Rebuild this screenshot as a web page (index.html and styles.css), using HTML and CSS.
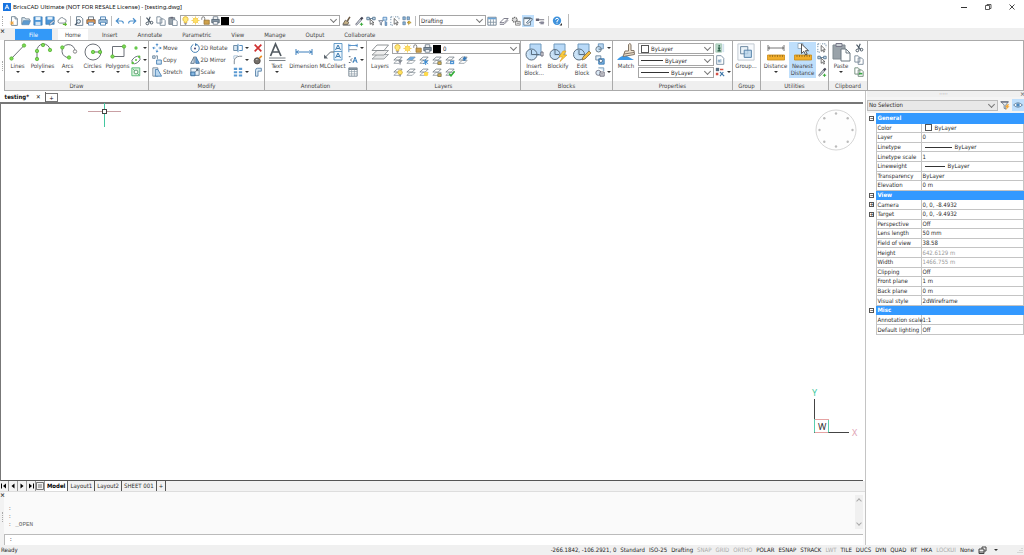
FILE: index.html
```html
<!DOCTYPE html>
<html lang="en">
<head>
<meta charset="utf-8">
<title>BricsCAD Ultimate - testing.dwg</title>
<link rel="stylesheet" href="styles.css">
</head>
<body>
<svg class="sprite" aria-hidden="true">
  <defs>
    <!-- small icons, 12 x 12 -->
    <symbol id="new" viewBox="0 0 12 12"><path d="M3 .8h4.500l2.500 2.500v8H3z" fill="#fff" stroke="#667b8c"/><path d="M7.300.8v2.700H10" fill="none" stroke="#667b8c"/><path d="M1 8.500h5M3.500 6v5M1.700 6.700l3.600 3.600M5.300 6.700l-3.600 3.600" stroke="#f0a030" stroke-width=".9"/></symbol>
    <symbol id="open" viewBox="0 0 12 12"><path d="M1 10V2h3.500l1 1.500H10V5" fill="#dce9f2" stroke="#667b8c"/><path d="M1 10.500 3 5.500h8.500l-2 5z" fill="#5d9bd0" stroke="#4a7ba5" stroke-width=".6"/></symbol>
    <symbol id="save" viewBox="0 0 12 12"><path d="M1 1h10v10H1z" fill="#4d96d8" stroke="#2f6ea8" stroke-width=".7"/><path d="M3 1.300h6v3.500H3z" fill="#e9f3fb"/><path d="M3 7h6v4H3z" fill="#d4e6f5"/></symbol>
    <symbol id="saveas" viewBox="0 0 12 12"><path d="M1 1h10v9H1z" fill="#4d96d8" stroke="#2f6ea8" stroke-width=".7"/><path d="M3 1.300h6v3H3z" fill="#e9f3fb"/><path d="m5 11 1-2.500L10.500 5l1 1L7 10.500z" fill="#eef" stroke="#467" stroke-width=".7"/></symbol>
    <symbol id="cloud" viewBox="0 0 12 12"><path d="M3 8.500a2.300 2.300 0 0 1 0-4.500 3 3 0 0 1 5.500-.5 2.500 2.500 0 0 1 0 5z" fill="#fff" stroke="#6d7a84"/><path d="M7 10h4M9.500 8.300 11.300 10l-1.800 1.700" fill="none" stroke="#59b82d" stroke-width="1.300"/></symbol>
    <symbol id="preview" viewBox="0 0 12 12"><path d="M3 .8h5l2.500 2.500v8H3z" fill="#fff" stroke="#5c7184"/><circle cx="5.500" cy="6.500" r="2.300" fill="#dcecf8" stroke="#456"/><path d="M3.800 8.200 1 11" stroke="#456" stroke-width="1.400"/></symbol>
    <symbol id="print" viewBox="0 0 12 12"><path d="M3 1h6v4H3z" fill="#fff" stroke="#567"/><path d="M1 4.500h10V9H1z" fill="#8596a4" stroke="#4a5a68"/><path d="M3 7.500h6V11H3z" fill="#fff" stroke="#567"/></symbol>
    <symbol id="printc" viewBox="0 0 12 12"><path d="M3 1h6v4H3z" fill="#fff" stroke="#567"/><path d="M1 4.500h10V9H1z" fill="#e39a53" stroke="#725844"/><path d="M3 7.500h6V11H3z" fill="#eef6ff" stroke="#5b86b5"/></symbol>
    <symbol id="printb" viewBox="0 0 12 12"><path d="M3 1h6v4H3z" fill="#e6f2fd" stroke="#3d7ab0"/><path d="M1 4.500h10V9H1z" fill="#a8c8e4" stroke="#4a6f92"/><path d="M3 7.500h6V11H3z" fill="#fff" stroke="#3d7ab0"/></symbol>
    <symbol id="undo" viewBox="0 0 12 12"><path d="M2 6h5.500q2.500 0 2.500 3M4.800 2.700 1.500 6l3.300 3.200" fill="none" stroke="#4b8fcc" stroke-width="1.400"/></symbol>
    <symbol id="redo" viewBox="0 0 12 12"><path d="M10 6H4.500Q2 6 2 9M7.200 2.700 10.500 6 7.200 9.200" fill="none" stroke="#4b8fcc" stroke-width="1.400"/></symbol>
    <symbol id="cut" viewBox="0 0 12 12"><path d="M7.500 1 5 7M3 2l5 6" stroke="#4d5a66" stroke-width="1.400"/><circle cx="4" cy="9" r="1.600" fill="none" stroke="#4d5a66" stroke-width="1.200"/><circle cx="9" cy="8" r="1.600" fill="none" stroke="#4d5a66" stroke-width="1.200"/></symbol>
    <symbol id="copy" viewBox="0 0 12 12"><path d="M1 1h4l2 2v5.500H1zM5 3.500h4l2 2v5.700H5z" fill="#fff" stroke="#6d7f90"/></symbol>
    <symbol id="copyg" viewBox="0 0 12 12"><path d="M1 1h4l2 2v5.500H1zM5 3.500h4l2 2v5.700H5z" fill="#fff" stroke="#63806d"/><path d="M6 8h4" stroke="#39a845" stroke-width="2"/></symbol>
    <symbol id="clip" viewBox="0 0 12 12"><path d="M1 2h7v8H1z" fill="#9aa5ae" stroke="#6a7681"/><path d="M3 1h3v2H3z" fill="#667"/><path d="M5.500 4.500H9l2 2v5H5.500z" fill="#fff" stroke="#6d7f90"/></symbol>
    <symbol id="bulb" viewBox="0 0 12 12"><path d="M6 .8a3.500 3.500 0 0 0-1.800 6.500V9h3.600V7.300A3.500 3.500 0 0 0 6 .8z" fill="#ffe97a" stroke="#d9ab2a"/><path d="M4.500 10h3M5 11.300h2" stroke="#778"/></symbol>
    <symbol id="sun" viewBox="0 0 12 12"><path d="M6 .5v11M.5 6h11M2 2l8 8M10 2l-8 8" stroke="#f2cb4b"/><circle cx="6" cy="6" r="3.300" fill="#ffe066" stroke="#eebd32" stroke-width=".7"/></symbol>
    <symbol id="lock" viewBox="0 0 12 12"><path d="M1 5V3a1.800 1.800 0 0 1 4 0v3" fill="none" stroke="#777" stroke-width="1.200"/><path d="M4 5.500h7V11H4z" fill="#cfa24c" stroke="#967132"/></symbol>
    <symbol id="brush" viewBox="0 0 12 12"><path d="m9.500 1-3 5" stroke="#6c5942" stroke-width="1.800"/><path d="m4 5 4 2.500L7 10H1z" fill="#c9b48a" stroke="#5f5648"/><path d="M1 11h9" stroke="#555"/></symbol>
    <symbol id="dropper" viewBox="0 0 12 12"><path d="m2 10 5-6 1.500 1.500-5.500 5.500z" fill="#e4edf3" stroke="#556"/><path d="m7 3 2.500-2.200 1.800 1.800L9 5z" fill="#445"/><path d="M7 9.800h4M9 8v3.600" stroke="#3cab3c" stroke-width="1.300"/></symbol>
    <symbol id="pick" viewBox="0 0 12 12"><path d="M1 1.500h3v3H1zM8 1.500h3v3H8zM4 3h4" fill="#cfe3f4" stroke="#4d6d89"/><path d="M5 4v6l1.500-1.400L8 11l1-.6L7.800 8H9.500z" fill="#fff" stroke="#333" stroke-width=".8"/></symbol>
    <symbol id="filter" viewBox="0 0 12 12"><path d="M6 1.500h4.500V5H6z" fill="#cfe3f4" stroke="#4d86bd"/><path d="M.8 5.500H6L4.200 8v3l-1.500-.8V8z" fill="#dde" stroke="#567" stroke-width=".8"/><path d="M8.500 6v5.500h2V7" fill="#79a9d8" stroke="#47709b" stroke-width=".7"/></symbol>
    <symbol id="quick" viewBox="0 0 12 12"><path d="M1 1h3v3.500H1zM6 1h3v3.500H6zM1 7h3v3.500H1z" fill="#8cb7de" stroke="#4a6d8c" stroke-width=".7"/><path d="M8 6v5M6 8 8.500 6 11 8 8.500 9z" fill="#f5c842" stroke="#a6862f" stroke-width=".8"/></symbol>
    <symbol id="sel" viewBox="0 0 12 12"><path d="M1 1h3M6 1h4.500M1 1v4M1 7v4h3M10.800 2v3" stroke="#5e7f9c" fill="none" stroke-dasharray="1.500 1"/><path d="M5 3v7l1.600-1.600L8 11l1-.6-1.200-2.400H10z" fill="#fff" stroke="#333" stroke-width=".8"/></symbol>
    <symbol id="grid" viewBox="0 0 12 12"><path d="M1 1.500h10v9.500H1z" fill="#fff" stroke="#607486"/><path d="M1.300 2h9.400v2H1.300z" fill="#69a3d7"/><path d="M1 7.500h10M4.300 4v7M7.700 4v7" stroke="#8193a2"/></symbol>
    <symbol id="sheets" viewBox="0 0 12 12"><path d="m1 8 5-5h5l-5 5z" fill="#fff" stroke="#667"/><path d="m1 10 5 0 5-5" fill="none" stroke="#667"/></symbol>
    <symbol id="gear" viewBox="0 0 12 12"><circle cx="4.500" cy="4.500" r="2.800" fill="#ddd" stroke="#666" stroke-width="1.500" stroke-dasharray="1.500 .7"/><path d="M5.500 6.500h5.500V11H5.500z" fill="#eee" stroke="#777"/><path d="M7 8.700h3" stroke="#777"/></symbol>
    <symbol id="props" viewBox="0 0 12 12"><path d="M1 2h8v9H1z" fill="#f8fbfe" stroke="#5f7485"/><path d="M1.300 3h7.500" stroke="#5f7485" stroke-width="1.500"/><path d="m4 8 5-5h2v2L6 9z" fill="#c9dbe9" stroke="#456" stroke-width=".8"/></symbol>
    <symbol id="toggle" viewBox="0 0 12 12"><path d="M1 3h4v3H1z" fill="#667"/><path d="M5 4.500h6M11 8H5" stroke="#556"/><path d="M6.500 6.500h4V10h-4z" fill="#889"/></symbol>
    <symbol id="help" viewBox="0 0 12 12"><circle cx="6" cy="5.700" r="5" fill="#3f92dc"/><path d="M4.300 4.500q0-1.700 1.700-1.700T7.700 4.300Q7.700 5.500 6 6v1.200M6 8v1.200" fill="none" stroke="#fff" stroke-width="1.200"/><path d="m9 11.500 3 0 0-3z" fill="#333"/></symbol>
    <symbol id="point" viewBox="0 0 12 12"><circle cx="6" cy="6" r="2" fill="#66c84b"/></symbol>
    <symbol id="ellipse" viewBox="0 0 12 12"><ellipse cx="6" cy="6" rx="5.500" ry="3.500" transform="rotate(-35 6 6)" fill="none" stroke="#5f6b76"/><circle cx="6" cy="6" r="1.200" fill="#5ac43a"/><circle cx="2" cy="9.500" r="1.500" fill="#5ac43a"/><circle cx="9.800" cy="2" r="1.500" fill="#5ac43a"/></symbol>
    <symbol id="region" viewBox="0 0 12 12"><path d="M1 1h9.500v9.500H1z" fill="#d9f3dc" stroke="#4bb36c"/><path d="m2 2 8 8" stroke="#4bb36c"/><circle cx="6" cy="6" r="2.300" fill="#fff" stroke="#4c8d60"/></symbol>
    <symbol id="move" viewBox="0 0 12 12"><path d="M6 1v3M6 8v3M1 6h3M8 6h3M4.600 2.400 6 1l1.400 1.400M4.600 9.600 6 11l1.400-1.400M2.400 4.600 1 6l1.400 1.400M9.600 4.600 11 6 9.600 7.400" fill="none" stroke="#3d84c6" stroke-width="1.100"/></symbol>
    <symbol id="dup" viewBox="0 0 12 12"><path d="M.8 1h3v3h-3zM5 1h1.500v4" fill="#d6e6f3" stroke="#657d92"/><path d="M5.500 6h5.700v5H5.500z" fill="#cce2f5" stroke="#3d78ad"/></symbol>
    <symbol id="stretch" viewBox="0 0 12 12"><path d="M1 1h6v10H1z" fill="#e7eff6" stroke="#708292"/><path d="m4 3 3 0 4.500 8H4z" fill="#b9d6ee" stroke="#3d78ad"/></symbol>
    <symbol id="rotate" viewBox="0 0 12 12"><path d="M4 1.800A5 5 0 1 0 8 1.700" fill="none" stroke="#4a83b5" stroke-width="1.200"/><path d="m6 0 3 2-3 2z" fill="#3d78ad"/><circle cx="6" cy="6.500" r="1.200" fill="#447"/></symbol>
    <symbol id="mirror" viewBox="0 0 12 12"><path d="M5 2v8H.8z" fill="#d8e4ee" stroke="#4d6479"/><path d="M7 2v8h4.200z" fill="#6ba5d9" stroke="#34699a"/></symbol>
    <symbol id="scale" viewBox="0 0 12 12"><path d="M1 1.500h10V10H1z" fill="#e8f1f8" stroke="#53738f"/><path d="M1 6h5v4.500H1z" fill="#85b6df" stroke="#34699a"/><path d="M6.500 5.500 9.500 3M7.500 3h2v2" stroke="#345" fill="none"/></symbol>
    <symbol id="align" viewBox="0 0 12 12"><path d="M.8 3h4.500v6H.8z" fill="#dbe8f3" stroke="#587996"/><path d="M6 1v10M7.500 3h3.700v6H7.500" fill="none" stroke="#4785bc" stroke-width="1.100"/></symbol>
    <symbol id="fillet" viewBox="0 0 12 12"><path d="M1.500 11V7Q2 2 8 1.500h3" fill="none" stroke="#65727e"/><path d="M1 5V1h5" fill="none" stroke="#a0bdd6"/></symbol>
    <symbol id="array" viewBox="0 0 12 12"><path d="M1 1h4v2.700H1zM7 1h4v2.700H7zM1 5h4v2.500H1zM7 5h4v2.500H7zM1 9h4v2.500H1zM7 9h4v2.500H7z" fill="#5a99d1"/></symbol>
    <symbol id="erase" viewBox="0 0 12 12"><path d="m2 2 8 8M10 2l-8 8" stroke="#cf3030" stroke-width="2"/></symbol>
    <symbol id="explode" viewBox="0 0 12 12"><circle cx="5" cy="7" r="3.700" fill="#75706a" stroke="#4a4642"/><path d="m7.500 4 3-3" stroke="#ec8d21" stroke-width="2"/><path d="M3.500 5.500h2" stroke="#ddd"/></symbol>
    <symbol id="pline" viewBox="0 0 12 12"><path d="M3 11V4q0-2.500 2.500-2.500H10V5H6v6z" fill="#d7e8f6" stroke="#4e7ba3"/></symbol>
    <symbol id="dims" viewBox="0 0 12 12"><path d="M1 1v10M11 1v4M1 3h10M2.500 2 1.500 3l1 1M9.500 2l1 1-1 1" fill="none" stroke="#3d82c2"/><path d="M1 8h10" stroke="#73808c"/></symbol>
    <symbol id="leader" viewBox="0 0 12 12"><path d="M1 2h2M1 9h2M3 6l2-2M3 6l2 2" fill="none" stroke="#456"/><path d="m6 9.500 2.500-7L11 9.500M7 7h3" fill="none" stroke="#3c7fbb" stroke-width="1.200"/></symbol>
    <symbol id="table" viewBox="0 0 12 12"><path d="M1 1h10v10H1z" fill="#fff" stroke="#697a88"/><path d="M1 2.500h10" stroke="#697a88" stroke-width="2"/><path d="M1 5.500h10M1 8.300h10M4.300 3v8M7.700 3v8" stroke="#8a98a4" stroke-width=".8"/></symbol>
    <symbol id="lay" viewBox="0 0 12 12"><path d="m1 10 4-3.500h6L7.500 10z" fill="#fff" stroke="#8a949c" stroke-width=".9"/><path d="m1 6 4-3.500h6L7.500 6z" fill="#fff" stroke="#69747d" stroke-width=".9"/></symbol>
    <symbol id="lay-g" viewBox="0 0 12 12"><use href="#lay"/><circle cx="8.500" cy="7" r="2" fill="#8c9399"/><path d="M8.500 8v3.500" stroke="#667"/></symbol>
    <symbol id="lay-b" viewBox="0 0 12 12"><use href="#lay"/><path d="m1.500 6 3.500-3.500h6L7.500 6z" fill="#72a9db"/></symbol>
    <symbol id="lay-f" viewBox="0 0 12 12"><use href="#lay"/><path d="M8 5v7M5 6.500l6 4M11 6.500l-6 4" stroke="#2f87d4" stroke-width="1.100"/></symbol>
    <symbol id="lay-l" viewBox="0 0 12 12"><use href="#lay"/><path d="M7 8h4v3.500H7z" fill="#ddb052" stroke="#775"/></symbol>
    <symbol id="lay-m" viewBox="0 0 12 12"><use href="#lay"/><path d="M6 7h5v4H6z" fill="#4f94d4"/><path d="M7.500 9h2" stroke="#fff"/></symbol>
    <symbol id="lay-u" viewBox="0 0 12 12"><use href="#lay"/><path d="m5 5 3-3.500L11 5H9v2H6.500V5z" fill="#3478b8"/></symbol>
    <symbol id="lay-y" viewBox="0 0 12 12"><use href="#lay"/><circle cx="8.500" cy="6.500" r="2.700" fill="#ffe15e" stroke="#d1a92a" stroke-width=".7"/><path d="M8.500 9v2.500" stroke="#777" stroke-width="1.500"/></symbol>
    <symbol id="lay-s" viewBox="0 0 12 12"><use href="#lay"/><circle cx="8.500" cy="8.500" r="2.700" fill="#ffda4a"/></symbol>
    <symbol id="lay-c" viewBox="0 0 12 12"><use href="#lay"/><path d="m5 8 2.200 2.500L11.500 5" fill="none" stroke="#36b03a" stroke-width="2"/></symbol>
    <symbol id="blk" viewBox="0 0 12 12"><path d="M4 1h6v6H4z" fill="#b9d8f3" stroke="#5f8cb3"/><circle cx="4.300" cy="7.500" r="3.300" fill="#c6e0f5" fill-opacity=".8" stroke="#586a7a"/><path d="M4.300 7.500h3" stroke="#586a7a"/></symbol>
    <symbol id="blk2" viewBox="0 0 12 12"><path d="M1 1h6v5H1z" fill="#e4eef6" stroke="#607d97"/><path d="M4.500 4.500H11V11H4.500z" fill="#77b0e2" stroke="#2f71ac"/><circle cx="7" cy="7" r="2" fill="#fff" stroke="#44637f"/></symbol>
    <symbol id="blk3" viewBox="0 0 12 12"><path d="M4 1h6.500v4" fill="#dcebf7" stroke="#6f95b5"/><circle cx="4" cy="7" r="3" fill="#dcebf7" stroke="#667"/><path d="M6 6h5v5H6z" fill="#fff" stroke="#556"/><path d="M7 8h3M7 9.500h3" stroke="#556" stroke-width=".7"/></symbol>
    <symbol id="exp" viewBox="0 0 12 12"><path d="M1 1h7v10H1z" fill="#b8d7c8" stroke="#a6c8b6"/><path d="M5 2.500v2M3.500 6h3M5 5v4M3 9.500h4" stroke="#285c45" stroke-width="1.500"/><path d="M9 1h2v10H9z" fill="#d4e3f0"/></symbol>
    <symbol id="doc" viewBox="0 0 12 12"><path d="M2 .8h5.500L10.500 4v7.200H2z" fill="#fff" stroke="#6a8297"/><path d="M4 9V6h1.500v3M7 9V5" fill="none" stroke="#7098ba"/></symbol>
    <symbol id="csel" viewBox="0 0 12 12"><path d="M1 1h4v4H1z" fill="#556b80"/><path d="M6 2h4v2H6zM1 7h3v3H1z" fill="#d45045"/><path d="m6 6 5 5M10 6l-4 5" stroke="#3f78aa" stroke-width="1.300"/></symbol>
    <symbol id="eye" viewBox="0 0 12 12"><path d="M.7 6Q6 .8 11.300 6 6 11.200.7 6z" fill="#fff" stroke="#4f7190"/><circle cx="6" cy="6" r="2.200" fill="#4b88c0"/></symbol>
    <symbol id="funnel" viewBox="0 0 12 12"><path d="M1 2h9L7 6v5l-2-1V6z" fill="#e8edf1" stroke="#657684"/><path d="M1 2.500h9" stroke="#667" stroke-width="1.300"/><path d="m9 5-3 3.500h2L7 12l4.500-4.500h-2L11 5z" fill="#f6a835"/></symbol>
    <!-- large icons, 20 x 20 -->
    <symbol id="L-line" viewBox="0 0 20 20"><path d="M3.500 16.500 16 3.500" stroke="#6c7178"/><circle cx="3.500" cy="16.500" r="1.700" class="node"/><circle cx="16" cy="3.500" r="1.700" class="node"/></symbol>
    <symbol id="L-poly" viewBox="0 0 20 20"><path d="M4 17V9a6.500 6.500 0 0 1 13-1" fill="none" stroke="#6c7178"/><circle cx="4" cy="17" r="1.700" class="node"/><circle cx="4" cy="9" r="1.700" class="node"/><circle cx="17" cy="8" r="1.700" class="node"/><circle cx="10" cy="3" r="1.700" class="node"/></symbol>
    <symbol id="L-arc" viewBox="0 0 20 20"><path d="M11.500 15.500A6.500 6.500 0 1 1 17 9" fill="none" stroke="#6c7178"/><circle cx="4.300" cy="5.500" r="1.700" class="node"/><circle cx="11" cy="15.500" r="1.700" class="node"/><circle cx="17" cy="9.500" r="1.700" fill="#fff" stroke="#888"/></symbol>
    <symbol id="L-circle" viewBox="0 0 20 20"><circle cx="10" cy="10" r="8" fill="none" stroke="#6c7178"/><path d="M10 10h8" stroke="#6c7178"/><circle cx="10" cy="10" r="1.700" class="node"/><circle cx="17" cy="10" r="1.700" class="node"/></symbol>
    <symbol id="L-rect" viewBox="0 0 20 20"><path d="M4.500 4.500H16v10H4.500z" fill="none" stroke="#6c7178"/><circle cx="4.500" cy="14.500" r="1.700" class="node"/><circle cx="16" cy="4.500" r="1.700" class="node"/></symbol>
    <symbol id="L-text" viewBox="0 0 20 20"><path d="m3.500 14 5-12L14 14M5.300 10h7" fill="none" stroke="#525a61" stroke-width="1.700"/><path d="M2 16h16.500M2 18.500h16.500" stroke="#6d747a" stroke-width=".9"/></symbol>
    <symbol id="L-dim" viewBox="0 0 20 20"><path d="M2 7v6M18 7v6M2 10h16M4.500 8.500 2.500 10l2 1.500M15.500 8.500l2 1.500-2 1.500" fill="none" stroke="#3d7fbb"/></symbol>
    <symbol id="L-ml" viewBox="0 0 20 20"><path d="M11 1.500h8v16.500h-8zM11 9.500h8" fill="#f1f8fe" stroke="#5793c4" stroke-width=".9"/><path d="m12.500 8 2.500-5 2.500 5M13.500 6.500h3M12.500 16l2.500-5 2.500 5M13.500 14.500h3" fill="none" stroke="#3979ae"/><path d="M11 10H7.500L2 15.500" fill="none" stroke="#5c656d"/><path d="M1 16.500v-4l4 4z" fill="#5c656d"/></symbol>
    <symbol id="L-layers" viewBox="0 0 20 20"><path d="m2 17 5-4.500h11.500L14 17z" fill="#e4e6e7" stroke="#8d9296" stroke-width=".8"/><path d="m2 13 5-4.500h11.500L14 13z" fill="#eee" stroke="#858a8e" stroke-width=".8"/><path d="M2 8.500 7 3h11.500L14 8.500z" fill="#fff" stroke="#73787c" stroke-width=".8"/></symbol>
    <symbol id="L-insert" viewBox="0 0 20 20"><path d="M6 2h11v11H6z" fill="#b8d9f7" stroke="#719abd"/><circle cx="7.500" cy="12.500" r="5.500" fill="#bedcf5" fill-opacity=".8" stroke="#596e81"/><path d="M7.500 8v4.500h8" fill="none" stroke="#596e81"/><path d="M17 10h2v4h-2z" fill="#fff" stroke="#667"/></symbol>
    <symbol id="L-blockify" viewBox="0 0 20 20"><path d="M6 2h11v11H6z" fill="#b8d9f7" stroke="#719abd"/><circle cx="7" cy="12.500" r="5" fill="#bedcf5" fill-opacity=".8" stroke="#596e81"/><path d="M7 8v4.500h4" fill="none" stroke="#596e81"/><path d="m15 9-4 6h3.500L12 19.500l7-6.500h-3.500L18 9z" fill="#f8cb3c" stroke="#d99a23" stroke-width=".6"/></symbol>
    <symbol id="L-edit" viewBox="0 0 20 20"><path d="M6 2h11v11H6z" fill="#b8d9f7" stroke="#719abd"/><circle cx="7" cy="12.500" r="5.500" fill="#bedcf5" fill-opacity=".8" stroke="#596e81"/><path d="M7 8v4.500h5" fill="none" stroke="#596e81"/><path d="m10 18 1-3 6-6 2 2-6 6z" fill="#f3bd40" stroke="#77623a" stroke-width=".7"/></symbol>
    <symbol id="L-match" viewBox="0 0 20 20"><path d="M1 18q4-5 9-4.500l8 4.500z" fill="#3d9ae8"/><path d="M12.500 2.500q1.500-2 2.500 0v6h3l.5 4L7 14.500 9 9h3.500z" fill="#eee2cf" stroke="#827567"/><path d="m8 12 10-1.500" stroke="#827567"/></symbol>
    <symbol id="L-group" viewBox="0 0 20 20"><path d="M1 1h18v18H1z" fill="#f7fafd" stroke="#bcc5cd"/><path d="M4 4h8v8H4z" fill="#eaf2f8" stroke="#627f98"/><path d="M8 8h8v8H8z" fill="#b7d3ea" fill-opacity=".8" stroke="#4d7ca5"/></symbol>
    <symbol id="ruler" viewBox="0 0 20 20"><path d="M1.500 13h17v5h-17z" fill="#f1ae2b" stroke="#c98a17" stroke-width=".8"/><path d="M4 13v2M6.500 13v2M9 13v2M11.500 13v2M14 13v2M16.500 13v2" stroke="#87601a" stroke-width=".7"/></symbol>
    <symbol id="L-dist" viewBox="0 0 20 20"><path d="M2 3v6M18 3v6M2 6h16M4 4.700 2.500 6 4 7.300M16 4.700 17.500 6 16 7.300" fill="none" stroke="#777"/><use href="#ruler"/></symbol>
    <symbol id="L-near" viewBox="0 0 20 20"><use href="#ruler"/><path d="M5 1.500h5v5H5z" fill="#fff" stroke="#8aa0b2" stroke-width=".8"/><path d="M8.500 2v9.500l2.300-2.200 1.900 3.700 1.500-.8-1.800-3.500h3.100z" fill="#fff" stroke="#444" stroke-width=".9"/></symbol>
    <symbol id="L-paste" viewBox="0 0 20 20"><path d="M2 3h12v14H2z" fill="#99a2a9" stroke="#7f898f"/><path d="M5 1.500h6v3H5z" fill="#ccd2d6" stroke="#778"/><path d="M10 7h5l4 4v8h-9z" fill="#fff" stroke="#6c7881"/><path d="M15 7v4h4" fill="none" stroke="#6c7881"/></symbol>
  </defs>
</svg>

<header class="titlebar">
  <svg class="logo" viewBox="0 0 9 9"><rect width="9" height="9" fill="#1673e0"/><path d="M2.300 7 4.500 2l2.200 5M3.200 5.300h2.600" fill="none" stroke="#fff"/></svg>
  <span class="title">BricsCAD Ultimate (NOT FOR RESALE License) - [testing.dwg]</span>
  <div class="winctl">
    <button aria-label="Minimize"><svg viewBox="0 0 8 8"><path d="M1 4.500h6" stroke="#333"/></svg></button>
    <button aria-label="Restore"><svg viewBox="0 0 8 8"><path d="M1.500 2.500h4v4h-4zM3 2.500v-1h4v4H5.500" fill="none" stroke="#333" stroke-width=".8"/></svg></button>
    <button aria-label="Close"><svg viewBox="0 0 8 8"><path d="m1.500 1.500 5 5M6.500 1.500l-5 5" stroke="#333" stroke-width=".9"/></svg></button>
  </div>
</header>

<div class="quick">
  <i class="grip"></i>
  <button aria-label="New"><svg><use href="#new"/></svg></button><button aria-label="Open"><svg><use href="#open"/></svg></button><button aria-label="Save"><svg><use href="#save"/></svg></button><button aria-label="Save as"><svg><use href="#saveas"/></svg></button><button aria-label="Cloud"><svg><use href="#cloud"/></svg></button>
  <i class="sep"></i>
  <button aria-label="Preview"><svg><use href="#preview"/></svg></button><button aria-label="Print"><svg><use href="#printc"/></svg></button><button aria-label="Publish"><svg><use href="#printb"/></svg></button>
  <i class="sep"></i>
  <button aria-label="Undo"><svg><use href="#undo"/></svg></button><button aria-label="Redo"><svg><use href="#redo"/></svg></button>
  <i class="sep"></i>
  <button aria-label="Cut"><svg><use href="#cut"/></svg></button><button aria-label="Copy"><svg><use href="#copy"/></svg></button><button aria-label="Paste"><svg><use href="#clip"/></svg></button>
  <div class="combo layer-quick"><svg><use href="#bulb"/></svg><svg><use href="#sun"/></svg><svg><use href="#lock"/></svg><svg><use href="#print"/></svg><b class="black"></b><select aria-label="Current layer"><option>0</option></select></div>
  <button aria-label="Match"><svg><use href="#brush"/></svg></button><button aria-label="Pick properties"><svg><use href="#dropper"/></svg></button><button aria-label="Select similar"><svg><use href="#pick"/></svg></button><button aria-label="Filter"><svg><use href="#filter"/></svg></button><button aria-label="Select"><svg><use href="#sel"/></svg></button><button aria-label="Quick select"><svg><use href="#quick"/></svg></button>
  <i class="sep"></i>
  <div class="combo workspace"><select aria-label="Workspace"><option>Drafting</option></select></div>
  <button aria-label="Explorer"><svg><use href="#grid"/></svg></button><button aria-label="Sheets"><svg><use href="#sheets"/></svg></button><button aria-label="Settings"><svg><use href="#gear"/></svg></button><button class="on" aria-label="Properties"><svg><use href="#props"/></svg></button><button aria-label="Customize"><svg><use href="#toggle"/></svg></button>
  <i class="sep"></i>
  <button aria-label="Help"><svg><use href="#help"/></svg></button>
  <i class="sep end"></i>
</div>

<nav class="tabs">
  <button class="tinyx" aria-label="Close ribbon">×</button>
  <button class="file">File</button><button class="tab active">Home</button><button class="tab">Insert</button><button class="tab">Annotate</button><button class="tab">Parametric</button><button class="tab">View</button><button class="tab">Manage</button><button class="tab">Output</button><button class="tab">Collaborate</button>
</nav>

<div class="ribbon-row">
<i class="grip"></i>
<div class="ribbon">
  <section class="panel draw">
    <div class="tools">
      <button class="big"><svg><use href="#L-line"/></svg><span>Lines</span><i class="arr"></i></button>
      <button class="big"><svg><use href="#L-poly"/></svg><span>Polylines</span><i class="arr"></i></button>
      <button class="big"><svg><use href="#L-arc"/></svg><span>Arcs</span><i class="arr"></i></button>
      <button class="big"><svg><use href="#L-circle"/></svg><span>Circles</span><i class="arr"></i></button>
      <button class="big"><svg><use href="#L-rect"/></svg><span>Polygons</span><i class="arr"></i></button>
      <div class="col">
        <button class="sm" aria-label="Point"><svg><use href="#point"/></svg><i class="arr"></i></button>
        <button class="sm" aria-label="Ellipse"><svg><use href="#ellipse"/></svg><i class="arr"></i></button>
        <button class="sm" aria-label="Region"><svg><use href="#region"/></svg><i class="arr"></i></button>
      </div>
    </div>
    <h2>Draw</h2>
  </section>
  <section class="panel modify">
    <div class="tools">
      <div class="col wide">
        <button class="sm"><svg><use href="#move"/></svg>Move</button>
        <button class="sm"><svg><use href="#dup"/></svg>Copy</button>
        <button class="sm"><svg><use href="#stretch"/></svg>Stretch</button>
      </div>
      <div class="col wider">
        <button class="sm"><svg><use href="#rotate"/></svg>2D Rotate</button>
        <button class="sm"><svg><use href="#mirror"/></svg>2D Mirror</button>
        <button class="sm"><svg><use href="#scale"/></svg>Scale</button>
      </div>
      <div class="col">
        <button class="sm" aria-label="Align"><svg><use href="#align"/></svg><i class="arr"></i></button>
        <button class="sm" aria-label="Fillet"><svg><use href="#fillet"/></svg><i class="arr"></i></button>
        <button class="sm" aria-label="Array"><svg><use href="#array"/></svg><i class="arr"></i></button>
      </div>
      <div class="col">
        <button class="sm" aria-label="Erase"><svg><use href="#erase"/></svg></button>
        <button class="sm" aria-label="Explode"><svg><use href="#explode"/></svg></button>
        <button class="sm" aria-label="Edit polyline"><svg><use href="#pline"/></svg></button>
      </div>
    </div>
    <h2>Modify</h2>
  </section>
  <section class="panel annotation">
    <div class="tools">
      <button class="big"><svg><use href="#L-text"/></svg><span>Text</span><i class="arr"></i></button>
      <button class="big label"><svg><use href="#L-dim"/></svg><span>Dimension</span></button>
      <button class="big label"><svg><use href="#L-ml"/></svg><span>MLCollect</span></button>
      <div class="col">
        <button class="sm" aria-label="Dimensions"><svg><use href="#dims"/></svg><i class="arr"></i></button>
        <button class="sm" aria-label="Leader"><svg><use href="#leader"/></svg><i class="arr"></i></button>
        <button class="sm" aria-label="Table"><svg><use href="#table"/></svg></button>
      </div>
    </div>
    <h2>Annotation</h2>
  </section>
  <section class="panel layers">
    <div class="tools">
      <button class="big"><svg><use href="#L-layers"/></svg><span>Layers</span></button>
      <div class="col fill">
        <div class="combo"><svg><use href="#bulb"/></svg><svg><use href="#sun"/></svg><svg><use href="#lock"/></svg><svg><use href="#print"/></svg><b class="black"></b><select aria-label="Layer"><option>0</option></select></div>
        <div class="iconrow"><button class="sm" aria-label="Layer off"><svg><use href="#lay-g"/></svg></button><button class="sm" aria-label="Layer isolate"><svg><use href="#lay-b"/></svg></button><button class="sm" aria-label="Layer freeze"><svg><use href="#lay-f"/></svg></button><button class="sm" aria-label="Layer lock"><svg><use href="#lay-l"/></svg></button><button class="sm" aria-label="Layer match"><svg><use href="#lay-m"/></svg></button><button class="sm" aria-label="Layer previous"><svg><use href="#lay-u"/></svg></button></div>
        <div class="iconrow"><button class="sm" aria-label="All layers on"><svg><use href="#lay-y"/></svg></button><button class="sm" aria-label="Unisolate"><svg><use href="#lay"/></svg></button><button class="sm" aria-label="Thaw"><svg><use href="#lay-s"/></svg></button><button class="sm" aria-label="Unlock"><svg><use href="#lay-l"/></svg></button><button class="sm" aria-label="Set current"><svg><use href="#lay-c"/></svg></button></div>
      </div>
    </div>
    <h2>Layers</h2>
  </section>
  <section class="panel blocks">
    <div class="tools">
      <button class="big"><svg><use href="#L-insert"/></svg><span>Insert<br>Block...</span></button>
      <button class="big"><svg><use href="#L-blockify"/></svg><span>Blockify</span></button>
      <button class="big"><svg><use href="#L-edit"/></svg><span>Edit<br>Block</span></button>
      <div class="col">
        <button class="sm" aria-label="Create block"><svg><use href="#blk"/></svg><i class="arr"></i></button>
        <button class="sm" aria-label="Write block"><svg><use href="#blk2"/></svg></button>
        <button class="sm" aria-label="Attributes"><svg><use href="#blk3"/></svg><i class="arr"></i></button>
      </div>
    </div>
    <h2>Blocks</h2>
  </section>
  <section class="panel properties">
    <div class="tools">
      <button class="big"><svg><use href="#L-match"/></svg><span>Match</span></button>
      <div class="col fill combos">
        <div class="combo"><b class="swatch"></b><select aria-label="Color"><option>ByLayer</option></select></div>
        <div class="combo"><b class="rule"></b><select aria-label="Linetype"><option>ByLayer</option></select></div>
        <div class="combo"><b class="rule long"></b><select aria-label="Lineweight"><option>ByLayer</option></select></div>
      </div>
      <div class="col">
        <button class="sm" aria-label="Set by layer"><svg><use href="#exp"/></svg></button>
        <button class="sm" aria-label="List"><svg><use href="#doc"/></svg></button>
        <button class="sm" aria-label="Select by"><svg><use href="#csel"/></svg><i class="arr"></i></button>
      </div>
    </div>
    <h2>Properties</h2>
  </section>
  <section class="panel group">
    <div class="tools"><button class="big"><svg><use href="#L-group"/></svg><span>Group...</span></button></div>
    <h2>Group</h2>
  </section>
  <section class="panel utilities">
    <div class="tools">
      <button class="big mid"><svg><use href="#L-dist"/></svg><span>Distance</span><i class="arr"></i></button>
      <button class="big mid on"><svg><use href="#L-near"/></svg><span>Nearest<br>Distance</span></button>
      <div class="col">
        <button class="sm" aria-label="Select"><svg><use href="#sel"/></svg></button>
        <button class="sm" aria-label="Select similar"><svg><use href="#pick"/></svg></button>
        <button class="sm" aria-label="Pick"><svg><use href="#dropper"/></svg></button>
      </div>
    </div>
    <h2>Utilities</h2>
  </section>
  <section class="panel clipboard">
    <div class="tools">
      <button class="big"><svg><use href="#L-paste"/></svg><span>Paste</span><i class="arr"></i></button>
      <div class="col">
        <button class="sm" aria-label="Cut"><svg><use href="#cut"/></svg></button>
        <button class="sm" aria-label="Copy"><svg><use href="#copy"/></svg></button>
        <button class="sm" aria-label="Copy with base point"><svg><use href="#copyg"/></svg></button>
      </div>
    </div>
    <h2>Clipboard</h2>
  </section>
</div>
</div>

<div class="work">
  <main class="left">
    <div class="doctabs"><button class="doc">testing* <b>✕</b></button><button class="plus" aria-label="New drawing">+</button></div>
    <div class="canvas">
      <svg class="cursor" viewBox="0 0 34 30"><path d="M0 8.500h33" stroke="#c9a0a4"/><path d="M16.500 0v24" stroke="#43c7a0"/><rect x="14.500" y="6.500" width="4" height="4" fill="#fff" stroke="#444"/></svg>
      <svg class="compass" viewBox="0 0 42 42"><circle cx="21" cy="21" r="20" fill="#fefefe" stroke="#ccc" stroke-width=".8"/><g fill="#bbb"><circle cx="21" cy="4.500" r="1.200"/><circle cx="21" cy="37.500" r="1.200"/><circle cx="4.500" cy="21" r="1.200"/><circle cx="37.500" cy="21" r="1.200"/><circle cx="9.300" cy="9.300" r="1.200"/><circle cx="32.700" cy="9.300" r="1.200"/><circle cx="9.300" cy="32.700" r="1.200"/><circle cx="32.700" cy="32.700" r="1.200"/></g></svg>
      <svg class="ucs" viewBox="0 0 52 60"><path d="M4.500 18v34" stroke="#444"/><path d="M4 51.500h35" stroke="#444"/><path d="M4.500 38v13.500M18.500 38v13.500" stroke="#5bcfae"/><path d="M5 38.500h14M5 51.500h13" stroke="#e5a3a3"/><text x="2" y="15" fill="#3ec9a0">Y</text><text x="42" y="55" fill="#e0a3b3">X</text><text x="8" y="49" fill="#333">W</text></svg>
    </div>
    <div class="layouts">
      <button aria-label="First"><svg viewBox="0 0 8 8"><path d="M1.500 1.500v5" stroke="#000"/><path d="M6 1.500v5L3 4z"/></svg></button><button aria-label="Previous"><svg viewBox="0 0 8 8"><path d="M5.500 1.500v5L2.500 4z"/></svg></button><button aria-label="Next"><svg viewBox="0 0 8 8"><path d="M2.500 1.500v5L5.500 4z"/></svg></button><button aria-label="Last"><svg viewBox="0 0 8 8"><path d="M6.500 1.500v5" stroke="#000"/><path d="M2 1.500v5L5 4z"/></svg></button><button aria-label="List"><svg viewBox="0 0 8 8"><path d="M.5.5h7v7h-7zM2 3h4M2 5h4" fill="none" stroke="#555" stroke-width=".8"/></svg></button><button class="lt active">Model</button><button class="lt">Layout1</button><button class="lt">Layout2</button><button class="lt">SHEET 001</button><button class="lt add">+</button>
    </div>
    <div class="command">
      <div class="side"><button class="tinyx" aria-label="Close command line">×</button><i class="grip"></i></div>
      <div class="cmdbody">
        <div class="history"><pre>:
:
: _OPEN</pre><div class="scroll"><i class="chev up"></i><i class="chev"></i></div></div>
        <label class="prompt">:<input type="text" aria-label="Command"></label>
      </div>
    </div>
  </main>

  <aside class="props">
    <div class="phead"><span>·····</span><button class="tinyx" aria-label="Close properties">×</button></div>
    <div class="psel">
      <div class="combo"><select aria-label="Selection"><option>No Selection</option></select></div>
      <button aria-label="Filter"><svg><use href="#funnel"/></svg></button><button class="on" aria-label="Show"><svg><use href="#eye"/></svg></button>
    </div>
    <table>
      <colgroup><col class="c-box"><col class="c-name"><col></colgroup>
      <tr class="sec"><td><b class="box">−</b></td><th colspan="2">General</th></tr>
      <tr><td></td><th>Color</th><td><b class="swatch"></b>ByLayer</td></tr>
      <tr><td></td><th>Layer</th><td>0</td></tr>
      <tr><td></td><th>Linetype</th><td><b class="rule"></b>ByLayer</td></tr>
      <tr><td></td><th>Linetype scale</th><td>1</td></tr>
      <tr><td></td><th>Lineweight</th><td><b class="rule short"></b>ByLayer</td></tr>
      <tr><td></td><th>Transparency</th><td>ByLayer</td></tr>
      <tr><td></td><th>Elevation</th><td>0 m</td></tr>
      <tr class="sec"><td><b class="box">−</b></td><th colspan="2">View</th></tr>
      <tr><td><b class="box">+</b></td><th>Camera</th><td>0, 0, -8.4932</td></tr>
      <tr><td><b class="box">+</b></td><th>Target</th><td>0, 0, -9.4932</td></tr>
      <tr><td></td><th>Perspective</th><td>Off</td></tr>
      <tr><td></td><th>Lens length</th><td>50 mm</td></tr>
      <tr><td></td><th>Field of view</th><td>38.58</td></tr>
      <tr><td></td><th>Height</th><td class="dim">642.6129 m</td></tr>
      <tr><td></td><th>Width</th><td class="dim">1466.755 m</td></tr>
      <tr><td></td><th>Clipping</th><td>Off</td></tr>
      <tr><td></td><th>Front plane</th><td>1 m</td></tr>
      <tr><td></td><th>Back plane</th><td>0 m</td></tr>
      <tr><td></td><th>Visual style</th><td>2dWireframe</td></tr>
      <tr class="sec"><td><b class="box">−</b></td><th colspan="2">Misc</th></tr>
      <tr><td></td><th>Annotation scale</th><td>1:1</td></tr>
      <tr><td></td><th>Default lighting</th><td>Off</td></tr>
    </table>
  </aside>
</div>

<footer class="status">
  <span class="ready">Ready</span>
  <span class="coords">-266.1842, -106.2921, 0</span><button>Standard</button><button>ISO-25</button><button>Drafting</button><button class="off">SNAP</button><button class="off">GRID</button><button class="off">ORTHO</button><button>POLAR</button><button>ESNAP</button><button>STRACK</button><button class="off">LWT</button><button>TILE</button><button>DUCS</button><button>DYN</button><button>QUAD</button><button>RT</button><button>HKA</button><button class="off">LOCKUI</button><button>None</button>
  <svg class="tray" viewBox="0 0 9 9"><path d="M1 3h5v4.500H1zM4 3V1h4v4H6M1 6h5" fill="none" stroke="#444"/></svg>
  <i class="arr"></i>
  <svg class="corner" viewBox="0 0 6 6"><path d="M5 1v1M5 3v1M5 5v1M3 3v1M3 5v1M1 5v1" stroke="#bbb"/></svg>
</footer>
</body>
</html>
```
FILE: styles.css
```css
* { box-sizing: border-box; }
body {
  margin: 0;
  height: 100vh;
  display: flex;
  flex-direction: column;
  background: #fff;
  color: #2b2b2b;
  font: 6px/8px "DejaVu Sans Condensed", "DejaVu Sans", "Noto Sans", sans-serif;
  overflow: hidden;
}
button, select, input {
  margin: 0;
  padding: 0;
  border: 0;
  background: none;
  color: inherit;
  font: inherit;
}
svg { display: block; flex: none; }
.sprite { position: absolute; width: 0; height: 0; }
.node { fill: #7ed957; stroke: #4daf2a; stroke-width: .7px; }
.on { background: #bfdffc; }

.titlebar { display: flex; align-items: center; height: 13px; padding-left: 3px; flex: none; }
.logo { width: 8px; height: 8px; }
.title { margin-left: 2px; font: 6px/12px "Noto Sans", "Open Sans", sans-serif; color: #111; }
.winctl { margin-left: auto; display: flex; }
.winctl button { width: 24px; height: 12px; display: grid; place-items: center; }
.winctl svg { width: 8px; height: 8px; }

.grip { width: 1px; height: 10px; border-left: 1px dotted #aaa; flex: none; }
.quick { display: flex; align-items: center; height: 15px; padding-left: 2px; flex: none; }
.quick .grip { margin-right: 5px; }
.quick button { width: 12px; height: 12px; display: grid; place-items: center; flex: none; }
.quick button svg { width: 10px; height: 10px; }
.sep { width: 1px; height: 10px; margin: 0 2px; background: #bbb; flex: none; }
.sep.end { height: 14px; margin: 0 5px; }

.combo {
  display: flex;
  align-items: center;
  gap: 1px;
  height: 11px;
  border: 1px solid #a5a5a5;
  background: #fff;
  position: relative;
  min-width: 0;
}
.combo svg { width: 9px; height: 9px; }
.combo select { appearance: none; flex: 1; min-width: 0; height: 9px; padding: 0 9px 0 1px; outline: none; }
.combo::after, .chev {
  content: "";
  width: 4px;
  height: 4px;
  border: solid #777;
  border-width: 0 1px 1px 0;
  transform: rotate(45deg);
}
.combo::after { position: absolute; right: 3px; top: 1px; pointer-events: none; }
.black { width: 8px; height: 8px; background: #000; }
.layer-quick { width: 160px; margin: 0 1px; }
.workspace { width: 67px; margin-left: 1px; }

.tabs { display: flex; height: 12px; background: #efefef; flex: none; }
.tinyx { width: 4px; height: 6px; font: bold 6px/6px "DejaVu Sans", sans-serif; }
.tabs .tinyx { margin-right: 11px; }
.file { width: 37px; margin-right: 6px; margin-top: 1px; background: #3399f8; color: #fff; }
.tab { padding: 0 10px; margin-top: 1px; color: #444; }
.tab.active { padding: 0 7px; margin-right: 4px; background: #fff; }

.ribbon-row { display: flex; align-items: center; flex: none; }
.ribbon-row .grip { margin: 0 1px 0 2px; }
.ribbon { display: flex; flex: 1; min-width: 0; height: 51px; border: 1px solid #aaa; }
.panel { display: flex; flex-direction: column; border-right: 1px solid #aaa; flex: none; }
.panel h2 { margin: 0; font: inherit; line-height: 9px; text-align: center; background: #efefef; color: #444; }
.tools { display: flex; flex: 1; padding: 1px 0 0 1px; }
.draw { width: 144px; }
.modify { width: 116px; }
.annotation { width: 102px; }
.layers { width: 154px; }
.blocks { width: 92px; }
.properties { width: 120px; }
.group { width: 28px; }
.utilities { width: 68px; }
.clipboard { width: 39px; }

.big { width: 24px; display: flex; flex-direction: column; align-items: center; height: 36px; flex: none; color: #444; }
.big svg { width: 20px; height: 20px; }
.big span { line-height: 7px; white-space: nowrap; }
.mid { width: 27px; }
.annotation .tools { padding-left: 0; }
.label { width: 29px; }
.arr { width: 0; height: 0; border: 2px solid transparent; border-top-color: #333; border-bottom: 0; flex: none; }
.big .arr { margin-top: 2px; }
.col { display: flex; flex-direction: column; }
.col.fill { flex: 1; min-width: 0; }
.sm { display: flex; align-items: center; height: 12px; gap: 2px; padding: 0 1px; white-space: nowrap; color: #444; }
.sm svg { width: 10px; height: 10px; }
.wide .sm, .wider .sm { gap: 1px; }
.draw .tools { padding-left: 0; }
.draw .big { width: 25px; }
.modify .tools { padding-left: 2px; }
.wide { width: 38px; }
.wider { width: 44px; }
.modify .col:last-child { margin-left: 2px; }
.iconrow { display: flex; gap: 1px; }
.layers .combo, .combos .combo { margin-top: 1px; }
.group .big { width: 26px; }
.group .tools { padding-left: 0; }
.group svg { padding: 1px; }
.clipboard .tools { padding-left: 0; }
.swatch { display: inline-block; width: 8px; height: 8px; border: 1px solid #555; margin-left: 2px; background: #fff; flex: none; }
.rule { display: inline-block; height: 1px; width: 22px; margin-left: 2px; background: #333; flex: none; }
.rule.long { width: 28px; }

.work { display: flex; flex: 1; min-height: 0; }
.left { display: flex; flex-direction: column; flex: 1; min-width: 0; border-right: 1px solid #c4c4c4; }
.doctabs { display: flex; align-items: flex-end; height: 11px; padding-top: 1px; flex: none; color: #111; }
.doc { width: 46px; height: 10px; font-weight: bold; white-space: nowrap; border-right: 1px solid #666; }
.doc b { margin-left: 5px; }
.plus { width: 12px; height: 9px; border: 1px solid #777; border-left: 0; }
.canvas { position: relative; flex: 1; min-height: 0; border-top: 2px solid #777; border-left: 1px solid #777; border-bottom: 1px solid #555; margin-right: 2px; }
.cursor { position: absolute; left: 87px; top: -1px; width: 34px; height: 30px; }
.compass { position: absolute; right: 6px; top: 5px; width: 42px; height: 42px; }
.ucs { position: absolute; right: 1px; bottom: 39px; width: 52px; height: 60px; font: 9px "Noto Sans", sans-serif; }

.layouts { display: flex; height: 10px; background: #f2f2f2; flex: none; }
.layouts button { width: 9px; border-right: 1px solid #999; display: grid; place-items: center; }
.layouts svg { width: 8px; height: 8px; }
.layouts .lt { width: auto; padding: 0 2px; border-color: #555; }
.layouts .active { font-weight: bold; background: #fff; color: #000; }

.command { display: flex; height: 54px; flex: none; background: #fafafa; border-top: 1px solid #ddd; }
.side { width: 4px; display: flex; flex-direction: column; gap: 14px; background: #f2f2f2; }
.side .grip { margin-left: 2px; }
.cmdbody { flex: 1; display: flex; flex-direction: column; margin-right: 2px; font-family: "Liberation Mono", monospace; }
.history { display: flex; flex: 1; align-items: flex-end; justify-content: space-between; padding: 3px 0 5px 4px; color: #666; }
.history pre { margin: 0; font: 6px/8px "Liberation Mono", monospace; }
.scroll { display: flex; flex-direction: column; justify-content: space-between; align-items: center; align-self: stretch; width: 8px; padding: 4px 0; background: #f0f0f0; }
.chev { border-color: #aaa; }
.chev.up { transform: rotate(225deg); }
.prompt { display: flex; align-items: center; height: 11px; padding-left: 4px; background: #fff; border: 1px solid #bbb; border-width: 1px 0 0 1px; }
.prompt input { flex: 1; outline: none; }

.props { width: 158px; flex: none; padding-left: 1px; }
.phead { display: flex; justify-content: center; height: 6px; line-height: 6px; background: #f0f0f0; color: #777; }
.phead span { margin: auto; }
.psel { display: flex; height: 16px; align-items: center; gap: 1px; background: #f4f4f4; }
.psel .combo { flex: 1; background: #e8e8e8; border-color: #bbb; }
.psel button { width: 12px; height: 12px; display: grid; place-items: center; }
.psel svg { width: 10px; height: 10px; }
.props table { width: 100%; height: 222px; border-collapse: collapse; table-layout: fixed; }
.c-box { width: 9px; }
.c-name { width: 45px; }
.props td, .props th { padding: 0 0 0 1px; line-height: 8px; text-align: left; font-weight: normal; white-space: nowrap; border: 1px solid #c4c4c4; }
.props td:first-child { padding: 0; border: 0; text-align: center; }
.props .sec th { background: #3399ff; color: #fff; font-weight: bold; border-color: #3399ff; }
.box { display: block; width: 5px; height: 5px; margin: auto; border: 1px solid #555; font: bold 5px/3px "DejaVu Sans", sans-serif; }
.props td .swatch { width: 7px; height: 7px; margin-right: 3px; vertical-align: top; }
.props td .rule { width: 27px; margin-right: 3px; vertical-align: middle; }
.props td .rule.short { width: 20px; }
.props .dim { color: #999; }

.status { display: flex; align-items: center; gap: 4px; height: 10px; padding-right: 1px; background: #f0f0f0; flex: none; white-space: nowrap; color: #222; }
.ready { margin: 0 auto 0 1px; }
.off { color: #aaa; }
.tray { width: 9px; height: 9px; }
.status .arr { margin: 0 15px 0 3px; }
.corner { width: 6px; height: 6px; }
```
